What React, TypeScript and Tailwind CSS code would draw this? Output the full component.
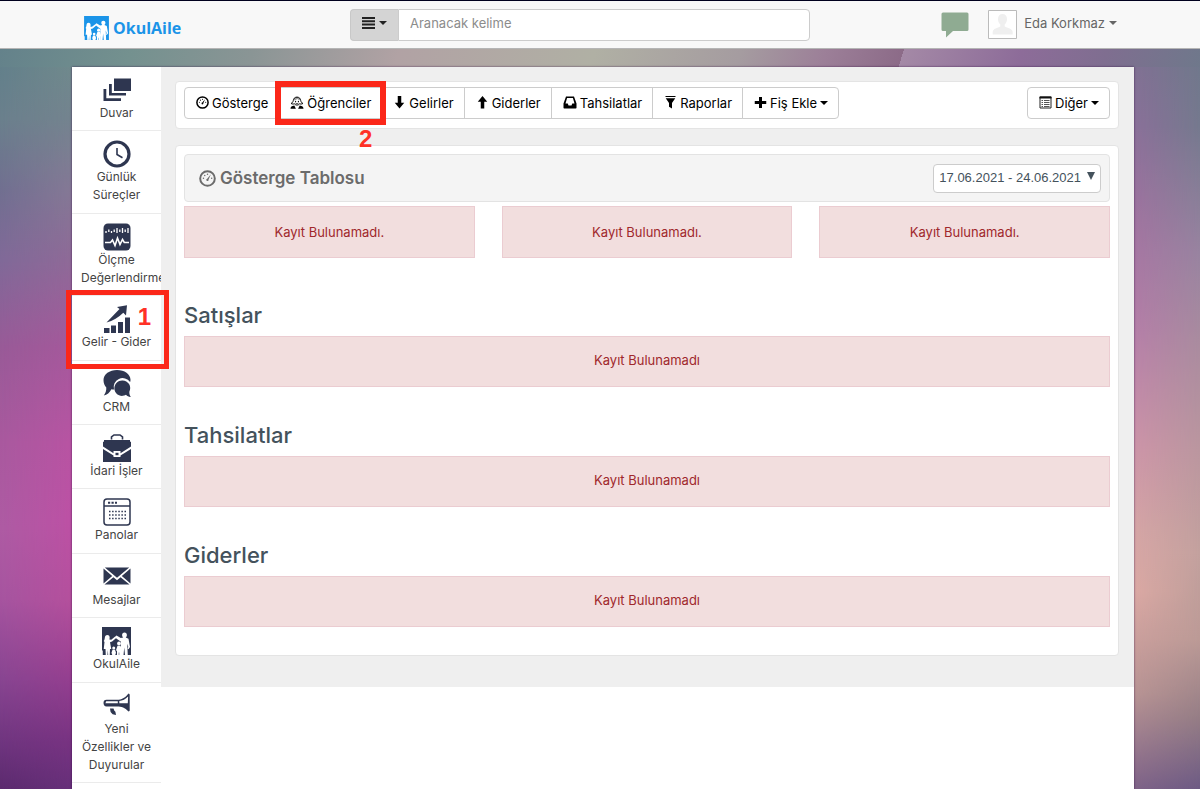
import React from 'react';

type IconProps = { className?: string };

function Caret({ className = '' }: IconProps) {
  return (
    <svg viewBox="0 0 8 4" className={`h-1 w-2 ${className}`} fill="currentColor" aria-hidden="true">
      <path d="M0 0h8L4 4z" />
    </svg>
  );
}

function GaugeIcon({ className = 'size-[13px]' }: IconProps) {
  return (
    <svg viewBox="0 0 26 26" className={className} fill="currentColor" aria-hidden="true">
      <circle cx="13" cy="13" r="11.2" fill="none" stroke="currentColor" strokeWidth="3" />
      <circle cx="6.8" cy="12.5" r="1.1" />
      <circle cx="8.8" cy="8.3" r="1.1" />
      <circle cx="13" cy="6.6" r="1.1" />
      <circle cx="19.4" cy="12.5" r="1.1" />
      <path d="M18.2 6.400 14.600 14.400a1.800 1.800 0 1 1-2-1.200z" />
    </svg>
  );
}

function StudentIcon() {
  return (
    <svg viewBox="0 0 28 26" className="h-[13px] w-[14px]" fill="currentColor" aria-hidden="true">
      <path
        d="M14 2.2c-5 0-7 3.600-7.400 6.800-.4 2.600-2 4.600-4.400 6 2.400 1.400 5 1.200 6.600.6 1.400 1.600 3.200 2.600 5.200 2.600s3.800-1 5.200-2.600c1.600.6 4.200.8 6.600-.6-2.400-1.400-4-3.400-4.400-6C21 5.800 19 2.200 14 2.200z"
        fill="none"
        stroke="currentColor"
        strokeWidth="2"
      />
      <path d="M7.500 8.500c3 .2 5.500-1 7-3 1.200 1.800 3.200 2.800 6 3l-.8-3.600L14 1.500 8.600 4.600z" opacity=".4" />
      <circle cx="11.200" cy="10.800" r="1.200" />
      <circle cx="16.800" cy="10.800" r="1.200" />
      <path d="M10.500 13.500c1.600 2.200 5.400 2.200 7 0" fill="none" stroke="currentColor" strokeWidth="1.300" />
      <path d="M1 25.500c0-3.600 2.400-5.600 7.600-6.400l3.200 6.400zM27 25.500c0-3.600-2.400-5.600-7.600-6.400l-3.200 6.400z" />
    </svg>
  );
}

function ArrowIcon({ up = false }: { up?: boolean }) {
  return (
    <svg viewBox="0 0 26 26" className="size-[13px]" fill="currentColor" aria-hidden="true">
      <path d={up ? 'M13 0l9.500 11.500h-6V25h-7V11.500h-6z' : 'M13 25l9.500-11.500h-6V0h-7v13.500h-6z'} />
    </svg>
  );
}

function InboxIcon() {
  return (
    <svg viewBox="0 0 28 26" className="h-[13px] w-[14px]" fill="currentColor" aria-hidden="true">
      <path
        fillRule="evenodd"
        d="M6 1h16l5 14v8.500a1.500 1.500 0 0 1-1.500 1.500h-23A1.500 1.500 0 0 1 1 23.500V15zM8.200 4 5 15h4.500l1.500 4h6l1.500-4H23L19.800 4z"
      />
    </svg>
  );
}

function FilterIcon() {
  return (
    <svg viewBox="0 0 26 26" className="size-[13px]" fill="currentColor" aria-hidden="true">
      <path d="M3 0h20v2H3zM3.500 4.500h19L16 14v11l-6-3.500V14z" />
    </svg>
  );
}

function PlusIcon() {
  return (
    <svg viewBox="0 0 26 26" className="size-[13px]" fill="currentColor" aria-hidden="true">
      <path d="M10 2h6v8h8.500v6H16v8h-6v-8H1.500v-6H10z" />
    </svg>
  );
}

function ListIcon() {
  return (
    <svg viewBox="0 0 26 26" className="size-[13px]" aria-hidden="true">
      <path d="M2 2h22v22H2z" fill="none" stroke="#222" strokeWidth="2" />
      <path d="M1 1h24v4H1z" fill="#111" />
      <path d="M5 9h3M5 13h3M5 17h3M5 21h3M10 9h11M10 13h11M10 17h11M10 21h11" stroke="#555" strokeWidth="2" />
    </svg>
  );
}

function FamilyIcon({ className = '' }: IconProps) {
  return (
    <svg viewBox="0 0 58 56" className={className} aria-hidden="true">
      <path d="M0 0h58v56H0z" fill="currentColor" />
      <g fill="#fff">
        <path d="M10.500 16c3.500 0 5 2.500 4.800 5.500l-.5 3.500 3.700.3L27 18.500l2 2.800-8.800 7.700-4.200 1.500 2.500 13.500H16l-.5 12h-3.200l-.6-10-.8 10H7.500L7 44H3.500L5 30l-1.500-2C5 26 5.500 23 5.700 21c.3-3 2-5 4.800-5z" />
        <path d="M45 11c3 0 4.800 2 4.800 5 0 2.200-1 4-2.300 5l5.500 2.500L56 40l-3 4.500-1.500-1 1-4-2-6 1 22.500h-5.500L44.500 41 43 56h-5.500l.5-26.500-9.500-6.500L27 18.500l2-1.500 8.500 5 5-1c-1.500-1-2.300-3-2.300-5 0-3 1.800-5 4.800-5z" />
        <circle cx="34" cy="33" r="3.800" />
        <path d="M31 37.500h6l3 9-2 1.500v8h-3.500v-5h-1v5H30v-8l-2-1.500z" />
        <circle cx="23.500" cy="42" r="3" />
        <path d="M21 45.500h5l2 6-1.500 4.500h-6L19 51.500z" />
        <path d="M0 47h1.500v9H0z" />
      </g>
    </svg>
  );
}

function PostsIcon() {
  return (
    <svg viewBox="0 0 28 28" className="size-7" fill="currentColor" aria-hidden="true">
      <path d="M11 2.500h17V15H11zM6 8h2.800v9H23v2.500H6zM.5 13h2.800v9.200H18V25H.5z" />
    </svg>
  );
}

function ClockIcon() {
  return (
    <svg viewBox="0 0 28 28" className="size-7" fill="none" stroke="currentColor" aria-hidden="true">
      <circle cx="14" cy="14" r="12" strokeWidth="3.200" />
      <path d="M14 8v6.500l5.500 3.200" strokeWidth="1.600" />
    </svg>
  );
}

function MonitorIcon() {
  return (
    <svg viewBox="0 0 28 28" className="size-7" aria-hidden="true">
      <rect x=".5" y=".5" width="27" height="27" rx="4.500" fill="currentColor" />
      <path d="M3 8v2M5.800 6.500V9M8.500 8v2M11.200 6.500V9M14 5v5M16.800 6.500V9M19.500 5v5M22.200 6.500V9M25 5v5" stroke="#fff" strokeWidth="1.300" />
      <path d="M2 19.500h5.500l2-2.500 2.500 5.500L14.500 15l2.500 6.500 2.500-5 1.800 3H26" fill="none" stroke="#fff" strokeWidth="1.600" />
    </svg>
  );
}

function ChartIcon() {
  return (
    <svg viewBox="0 0 28 28" className="size-7" fill="currentColor" aria-hidden="true">
      <path d="M1 23h5.500v5H1zM8 20.500h5V28H8zM15 17h5v11h-5zM22 12.500h5V28h-5z" />
      <path d="M3.500 17.500 16.500 4 14 2 24 .3 23 10.500l-2.700-2.700C15.500 12.500 10 16 3.500 17.500z" />
    </svg>
  );
}

function ChatIcon() {
  return (
    <svg viewBox="0 0 28 28" className="size-7" fill="currentColor" aria-hidden="true">
      <path d="M14 0c7.500 0 13.500 4.200 13.500 9.800 0 .8-.1 1.500-.4 2.200A9 9 0 0 0 11 19.500c-1 0-1.800-.1-2.600-.3C6.800 22.500 4 25 .8 25.500c1.600-2 2.700-4.600 2.500-7.900C1.600 15.500.5 13 .5 10 .5 4.200 6.500 0 14 0z" />
      <path d="M19.600 10.500a7.600 7.600 0 0 1 6.800 11c-.3 2.200.4 4 1.400 5.400-1.800.2-3.400-.6-4.800-2.100a7.700 7.700 0 1 1-3.400-14.300z" />
    </svg>
  );
}

function BriefcaseIcon() {
  return (
    <svg viewBox="0 0 28 28" className="size-7" aria-hidden="true">
      <path d="M8.500 5.500V3L11 1h6l2.500 2v2.500" fill="none" stroke="currentColor" strokeWidth="1.600" />
      <path d="M1 6h26v1.500l1 .5v4.500l-10.500 6.800V17h-7v2.300L0 12.500V8l1-.5z" fill="currentColor" />
      <path d="M0 15l10.500 6.500V23h7v-1.500L28 15v13H0z" fill="currentColor" />
      <path d="M12.500 18.800h3v2.400h-3z" fill="currentColor" />
    </svg>
  );
}

function CalendarIcon() {
  return (
    <svg viewBox="0 0 28 28" className="size-7" fill="none" stroke="currentColor" aria-hidden="true">
      <rect x="1" y="1" width="26" height="26" rx="3" strokeWidth="1.500" />
      <path d="M1 8h26" strokeWidth="1.500" />
      <path d="M5 4.700h9" strokeWidth="2" strokeDasharray="2.200 1.300" />
      <path d="M6 13.500h17M6 17h17M6 20.500h17" strokeWidth="1.500" strokeDasharray="1.500 1.600" />
    </svg>
  );
}

function MailIcon() {
  return (
    <svg viewBox="0 0 28 28" className="size-7" fill="currentColor" aria-hidden="true">
      <path d="M1.800 4.500h24.400L14 14.800zM.5 5.500l8.700 7.600L.5 20.500zM27.500 5.500l-8.700 7.600 8.700 7.400zM10.400 14.200 14 17.300l3.600-3.100 8.900 7.300h-25z" />
    </svg>
  );
}

function HornIcon() {
  return (
    <svg viewBox="0 0 28 28" className="size-7" fill="currentColor" aria-hidden="true">
      <path fillRule="evenodd" d="M3.500 7.800H14c4.500 0 8-1.800 11.500-6.300.8.2 1.200.6 1.200 1.300v15.400c0 .7-.4 1-1.200 1.200-3.500-3.800-7-5-11.500-5H3.500C1.500 14.400.5 13 .5 11s1-3.200 3-3.200zm-.3 1.500-.8 1.900H14.800v-2zM16.300 9v2.200h8.500l.3-6.700c-2.600 2.800-5.600 4.200-8.800 4.500z" />
      <path d="M7 16.500h3.500l.7 2 1.200 1.200.6 3.300-3.400-.7-2-2.300z" />
    </svg>
  );
}

const menuItems = [
  { label: 'Duvar', icon: <PostsIcon /> },
  { label: 'Günlük Süreçler', icon: <ClockIcon /> },
  { label: 'Ölçme Değerlendirme', icon: <MonitorIcon /> },
  { label: 'Gelir - Gider', icon: <ChartIcon />, step: '1' },
  { label: 'CRM', icon: <ChatIcon /> },
  { label: 'İdari İşler', icon: <BriefcaseIcon /> },
  { label: 'Panolar', icon: <CalendarIcon /> },
  { label: 'Mesajlar', icon: <MailIcon /> },
  { label: 'OkulAile', icon: <FamilyIcon className="h-7 w-[29px]" /> },
  { label: 'Yeni Özellikler ve Duyurular', icon: <HornIcon /> },
];

const tabs = [
  { label: 'Gösterge', icon: <GaugeIcon /> },
  { label: 'Öğrenciler', icon: <StudentIcon />, step: '2' },
  { label: 'Gelirler', icon: <ArrowIcon /> },
  { label: 'Giderler', icon: <ArrowIcon up /> },
  { label: 'Tahsilatlar', icon: <InboxIcon /> },
  { label: 'Raporlar', icon: <FilterIcon /> },
  { label: 'Fiş Ekle', icon: <PlusIcon />, caret: true },
];

// Blurred wallpaper: a strip above the panel and a gradient down each side
function Backdrop() {
  return (
    <div className="absolute inset-0 -z-10 overflow-hidden" aria-hidden="true">
      <div className="absolute inset-y-0 left-0 w-1/2 bg-[linear-gradient(180deg,#6f8c8c_6%,#74848f_15%,#857996_24%,#8f6a98_33%,#a5599c_44%,#b854a3_56%,#bd51a5_66%,#b5509d_76%,#953f90_86%,#783382_94%,#67307a_100%)]" />
      <div className="absolute inset-y-0 left-0 w-[72px] bg-[linear-gradient(180deg,#60808a_6%,#6a7f8c_15%,#706f90_24%,#806998_33%,#985a97_44%,#a8599e_56%,#ad5ba3_67%,#a5549f_76%,#884591_86%,#6f357f_94%,#5b2a6e_100%)] [mask-image:linear-gradient(90deg,black,transparent)]" />
      <div className="absolute inset-y-0 right-0 w-1/2 bg-[linear-gradient(180deg,#7e7192_6%,#8a7099_16%,#a074a0_28%,#b57fa8_42%,#cd95a8_57%,#d5a5a6_67%,#dba9a4_75%,#b89494_88%,#7f6388_100%)]" />
      <div className="absolute inset-y-0 right-0 w-[66px] bg-[linear-gradient(180deg,#6f788b_6%,#75798e_16%,#9883a0_32%,#a98b9f_43%,#ba969f_57%,#c3a19e_70%,#bb9a96_81%,#957d85_91%,#6d5a84_100%)] [mask-image:linear-gradient(90deg,transparent,black)]" />
      <div className="absolute inset-x-0 top-0 h-[67px] bg-[linear-gradient(107deg,#62808a_0%,#74918f_12%,#8a9595_22%,#b1a2a4_34%,#b0b0a4_50%,#a59ca0_62%,#9c7f98_69%,#8c6b88_75.300%,#a489a6_75.300%,#8d6c99_85%,#7f6e90_92%,#6f788b_100%)]" />
    </div>
  );
}

function EmptyAlert({ children, className = '' }: { children: React.ReactNode; className?: string }) {
  return (
    <p className={`border border-[#ebccd1] bg-[#f2dede] text-center text-[#a0282c] ${className}`}>
      {children}
    </p>
  );
}

export default function App() {
  return (
    <div className="relative isolate flex min-h-screen flex-col font-[Inter,'Noto_Sans',sans-serif] text-[13px] leading-[18px] text-black">
      <Backdrop />

      <header className="h-[49px] border-t border-b border-t-[#00001e] border-b-[#b5b5b5] bg-[#f8f8f8]">
        <div className="mr-[66px] ml-[72px] flex h-full items-center">
          <a href="#" className="flex w-[278px] items-center gap-1 pt-[6px] pl-3 font-['Open_Sans',sans-serif] text-base leading-6 font-bold text-[#1b94e8]">
            <FamilyIcon className="h-6 w-[25px]" />
            OkulAile
          </a>
          <form className="flex h-8 w-[460px]">
            <button type="button" aria-label="Arama türü" className="flex w-12 items-center justify-center gap-1 rounded-l border border-r-0 border-[#c8c8c8] bg-[#d4d4d4] pb-1 text-[#222]">
              <svg viewBox="0 0 13 12" className="h-3 w-[13px]" fill="currentColor" aria-hidden="true">
                <path d="M0 0h13v2H0zM0 3.300h13v2H0zM0 6.600h13v2H0zM0 9.900h13v2H0z" />
              </svg>
              <Caret />
            </button>
            <input
              type="text"
              aria-label="Aranacak kelime"
              placeholder="Aranacak kelime"
              className="min-w-0 flex-1 rounded-r border border-[#ccc] bg-white px-[11px] pb-1 placeholder:text-[#8c8c8c]"
            />
          </form>
          <div className="ml-auto flex items-center gap-[19px] pr-[17px]">
            <button type="button" aria-label="Mesajlar" className="text-[#8fab92]">
              <svg viewBox="0 0 28 26" className="h-[26px] w-7" fill="currentColor" aria-hidden="true">
                <path d="M2 .5h24a1.500 1.500 0 0 1 1.500 1.500v15.500A1.500 1.500 0 0 1 26 19H12l-7 6.500V19H2A1.500 1.500 0 0 1 .5 17.500V2A1.500 1.500 0 0 1 2 .5z" />
              </svg>
            </button>
            <button type="button" className="flex items-center text-[#666]">
              <svg viewBox="0 0 29 29" className="mr-[7px] size-[29px]" aria-hidden="true">
                <path d="M.5.500h28v28H.5z" fill="#fff" stroke="#bbb" />
                <path d="M14.500 4c3 0 4.500 2 4.500 5 0 2.500-1 4.500-2.300 5.500v2c2.500 1.500 8 2 8 5.500v2.500h-20V22c0-3.500 5.300-4 7.600-5.500v-2C11 13.500 10 11.500 10 9c0-3 1.500-5 4.500-5z" fill="#efefef" />
              </svg>
              <span className="flex items-center gap-1 pb-1">
                Eda Korkmaz
                <Caret />
              </span>
            </button>
          </div>
        </div>
      </header>

      <div className="mt-[18px] mr-[66px] ml-[72px] flex flex-1 items-start bg-white shadow-[0_0_2px_rgba(40,0,60,0.7)]">
        <nav className="w-[89px] shrink-0">
          <ul className="flex min-h-[716px] flex-col">
            {menuItems.map((item) => (
              <li key={item.label} className="relative grow border-b border-[#ebebeb]">
                <a href="#" className="flex flex-col items-center pt-[9px] pb-2 text-[#2e3650]">
                  {item.icon}
                  <span className="w-full overflow-hidden px-[9px] text-center text-xs leading-[18px] text-[#444]">
                    {item.label}
                  </span>
                </a>
                {item.step && (
                  <span className="absolute -top-[6px] -right-2 -bottom-[9px] -left-[6px] z-10 border-[5px] border-[#fb2719] pt-2 pr-[13px] text-right font-['Liberation_Sans',Arial,sans-serif] text-2xl leading-7 font-bold text-[#ff3126]">
                    {item.step}
                  </span>
                )}
              </li>
            ))}
          </ul>
        </nav>

        <main className="min-w-0 flex-1 bg-[#efefef] pt-[14px] pr-[15px] pb-[31px] pl-[14px]">
          <div className="flex items-start justify-between rounded border border-[#e4e4e4] bg-white px-2 pt-[5px] pb-[9px]">
            <div className="flex">
              {tabs.map((tab) => (
                <div key={tab.label} className="group relative -ml-px first:ml-0">
                  <button
                    type="button"
                    className="flex h-8 items-center gap-[3px] border border-[#ccc] bg-white pr-[10px] pl-[11px] whitespace-nowrap group-first:rounded-l group-last:rounded-r"
                  >
                    <span className="pb-[2px]">{tab.icon}</span>
                    {tab.label}
                    {tab.caret && <Caret />}
                  </button>
                  {tab.step && (
                    <>
                      <span className="absolute -inset-y-[6px] -right-1 -left-[3px] z-10 border-[6px] border-[#fb2719]" />
                      <span className="absolute top-[38px] right-[10px] z-10 font-['Liberation_Sans',Arial,sans-serif] text-2xl leading-7 font-bold text-[#ff3126]">
                        {tab.step}
                      </span>
                    </>
                  )}
                </div>
              ))}
            </div>
            <button type="button" className="flex h-8 items-center gap-[3px] rounded border border-[#ccc] bg-white pr-[10px] pl-[11px]">
              <span className="pb-[2px]">
                <ListIcon />
              </span>
              Diğer
              <Caret />
            </button>
          </div>

          <div className="mt-4 rounded border border-[#e4e4e4] bg-white px-2 pt-2 pb-7">
            <div className="flex h-12 items-center justify-between rounded border border-[#e3e3e3] bg-[#f4f4f4] pr-2 pl-[14px]">
              <h1 className="flex items-center gap-1 text-[17px] font-semibold text-[#6b6b6b]">
                <GaugeIcon className="size-[17px]" />
                Gösterge Tablosu
              </h1>
              <button type="button" className="flex h-[29px] items-center gap-[6px] rounded border border-[#ccc] bg-white px-[5px] font-['Liberation_Sans',Arial,sans-serif] text-[#44525c]">
                17.06.2021 - 24.06.2021
                <svg viewBox="0 0 8 8" className="mb-1 size-2" fill="currentColor" aria-hidden="true">
                  <path d="M0 0h8L4 8z" />
                </svg>
              </button>
            </div>

            <div className="mt-1 grid grid-cols-3 gap-[27px]">
              <EmptyAlert className="py-4">Kayıt Bulunamadı.</EmptyAlert>
              <EmptyAlert className="py-4">Kayıt Bulunamadı.</EmptyAlert>
              <EmptyAlert className="py-4">Kayıt Bulunamadı.</EmptyAlert>
            </div>

            <div className="mt-[45px] flex flex-col gap-9">
              {['Satışlar', 'Tahsilatlar', 'Giderler'].map((title) => (
                <section key={title}>
                  <h2 className="mb-[9px] text-[22px] leading-6 font-medium text-[#44525c]">{title}</h2>
                  <EmptyAlert className="pt-[14px] pb-[17px]">Kayıt Bulunamadı</EmptyAlert>
                </section>
              ))}
            </div>
          </div>
        </main>
      </div>
    </div>
  );
}
